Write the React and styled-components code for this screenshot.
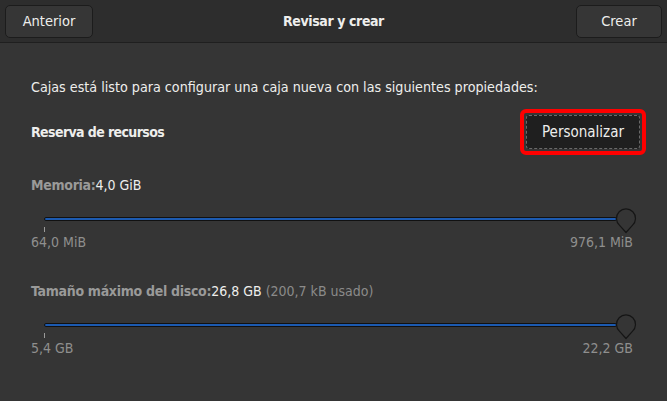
import React from "react";
import styled, { createGlobalStyle } from "styled-components";

const GlobalStyle = createGlobalStyle`
  html, body {
    margin: 0;
    padding: 0;
    background: #353535;
  }
  body {
    font-family: "DejaVu Sans Condensed", "Liberation Sans Narrow", "Liberation Sans", sans-serif;
    color: #eeeeec;
    -webkit-font-smoothing: antialiased;
  }
`;

const Window = styled.div`
  width: 667px;
  height: 401px;
  background: #353535;
  overflow: hidden;
`;

const HeaderBar = styled.header`
  height: 43px;
  box-sizing: border-box;
  padding: 0 5px;
  display: grid;
  grid-template-columns: 1fr auto 1fr;
  align-items: center;
  background: #2d2d2d;
  border-bottom: 1px solid #1f1f1f;
`;

const HeaderButton = styled.button`
  justify-self: ${(p) => (p.$end ? "end" : "start")};
  height: 33px;
  width: ${(p) => p.$w}px;
  box-sizing: border-box;
  border: 1px solid #1c1c1c;
  border-radius: 5px;
  background: #363636;
  color: #eeeeec;
  font-family: inherit;
  font-size: 14.5px;
  padding: 0;
`;

const Title = styled.h1`
  margin: 0;
  font-size: 14px;
  letter-spacing: -0.4px;
  font-weight: bold;
  color: #eeeeec;
`;

const Content = styled.main`
  padding: 34px 31px 0 31px;
  display: flex;
  flex-direction: column;
`;

const Description = styled.p`
  margin: 0;
  font-size: 14.2px;
  line-height: 20px;
  color: #eeeeec;
`;

const SectionRow = styled.div`
  margin-top: 19px;
  display: flex;
  align-items: center;
  justify-content: space-between;
  height: 32px;
`;

const SectionTitle = styled.span`
  font-size: 14px;
  font-weight: bold;
  letter-spacing: -0.6px;
  color: #eeeeec;
`;

const Highlight = styled.div`
  margin-right: -10px;
  padding: 2px;
  border: 4px solid #ff0000;
  border-radius: 6px;
  display: flex;
`;

const CustomizeButton = styled.button`
  height: 34px;
  width: 114px;
  box-sizing: border-box;
  background: #1f1f1f;
  border: 1px dashed #6a6a6a;
  border-radius: 3px;
  color: #eeeeec;
  font-family: inherit;
  font-size: 15px;
  padding: 0;
`;

const Setting = styled.section`
  margin-top: ${(p) => p.$top}px;
  display: flex;
  flex-direction: column;
`;

const SettingLabel = styled.div`
  font-size: 14px;
  line-height: 20px;
  color: #eeeeec;

  b {
    color: #9a9a99;
    font-weight: bold;
    letter-spacing: -0.3px;
  }

  .muted {
    color: #8b8b8a;
  }
`;

const Slider = styled.div`
  position: relative;
  margin-top: 22px;
  height: 4px;
`;

const Track = styled.div`
  margin: 0 19px 0 13px;
  height: 4px;
  box-sizing: border-box;
  background: #1c5ab0;
  border: 1px solid #111;
  border-radius: 2px;
`;

const Thumb = styled.svg`
  position: absolute;
  right: -1px;
  top: -9px;
`;

const Tick = styled.div`
  margin: 6px 0 0 13px;
  width: 1px;
  height: 5px;
  background: #9a9a99;
`;

const Scale = styled.div`
  display: flex;
  justify-content: space-between;
  padding-right: 3px;
  font-size: 14px;
  line-height: 20px;
  color: #8f8f8e;
`;

function RangeSlider({ min, max }) {
  return (
    <>
      <Slider>
        <Track />
        <Thumb width="22" height="26" viewBox="0 0 22 26">
          <path
            d="M11 24.5 L4.6 17.4 A9.5 9.5 0 1 1 17.4 17.4 Z"
            fill="#353535"
            stroke="#151515"
            strokeWidth="1.2"
            strokeLinejoin="round"
          />
        </Thumb>
      </Slider>
      <Tick />
      <Scale>
        <span>{min}</span>
        <span>{max}</span>
      </Scale>
    </>
  );
}

export default function App() {
  return (
    <Window>
      <GlobalStyle />
      <HeaderBar>
        <HeaderButton $w={88}>Anterior</HeaderButton>
        <Title>Revisar y crear</Title>
        <HeaderButton $w={86} $end>Crear</HeaderButton>
      </HeaderBar>
      <Content>
        <Description>
          Cajas está listo para configurar una caja nueva con las siguientes propiedades:
        </Description>
        <SectionRow>
          <SectionTitle>Reserva de recursos</SectionTitle>
          <Highlight>
            <CustomizeButton>Personalizar</CustomizeButton>
          </Highlight>
        </SectionRow>
        <Setting $top={27}>
          <SettingLabel>
            <b>Memoria:</b>4,0 GiB
          </SettingLabel>
          <RangeSlider min="64,0 MiB" max="976,1 MiB" />
        </Setting>
        <Setting $top={29}>
          <SettingLabel>
            <b>Tamaño máximo del disco:</b>26,8 GB <span className="muted">(200,7 kB usado)</span>
          </SettingLabel>
          <RangeSlider min="5,4 GB" max="22,2 GB" />
        </Setting>
      </Content>
    </Window>
  );
}
